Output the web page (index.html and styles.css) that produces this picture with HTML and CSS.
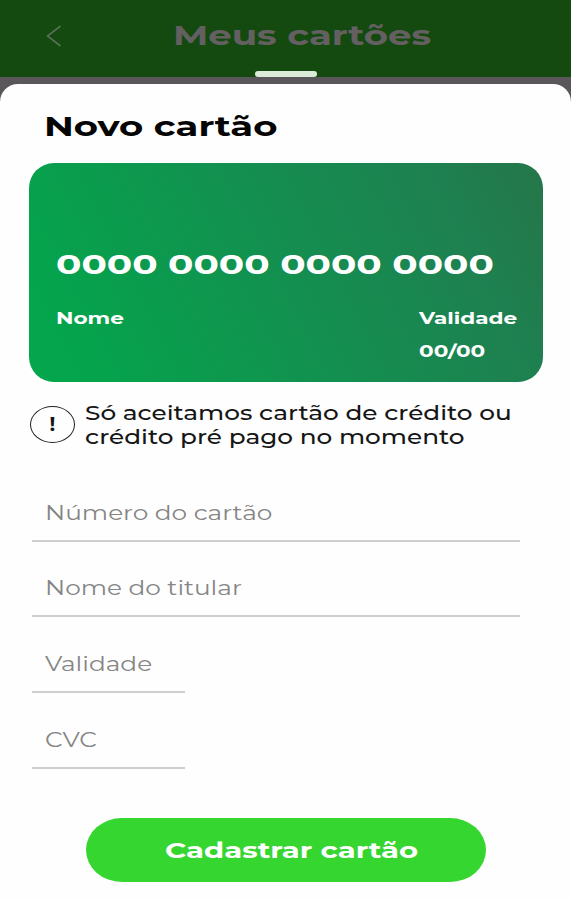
FILE: index.html
```html
<!DOCTYPE html>
<html lang="pt-BR">
<head>
  <meta charset="UTF-8" />
  <meta name="viewport" content="width=device-width, initial-scale=1.0"/>
  <title>Novo cartão</title>
  <link rel="stylesheet" href="styles.css">
</head>
<body>

<header class="top-bar">
  <svg class="back-icon" width="16" height="22" viewBox="0 0 16 22" fill="none" stroke="#557053" stroke-width="1.6">
    <path d="M14.5 1 L1.5 11 L14.5 21" />
  </svg>
  <h1><span class="wide page-title">Meus cartões</span></h1>
  <div class="handle"></div>
</header>

<main class="sheet">
  <h2><span class="wide sheet-title">Novo cartão</span></h2>

  <!-- Cartão -->
  <section class="card">
    <p class="card-number"><span class="wide number">0000 0000 0000 0000</span></p>
    <div class="card-info">
      <span class="wide">Nome</span>
      <div class="expiry">
        <span class="wide">Validade</span>
        <span class="wide expiry-date">00/00</span>
      </div>
    </div>
  </section>

  <!-- Aviso -->
  <div class="notice">
    <div class="notice-icon">!</div>
    <p>
      <span class="wide">Só aceitamos cartão de crédito ou</span>
      <span class="wide">crédito pré pago no momento</span>
    </p>
  </div>

  <!-- Formulário -->
  <form class="card-form">
    <label class="field"><span class="wide">Número do cartão</span></label>
    <label class="field"><span class="wide">Nome do titular</span></label>
    <label class="field short"><span class="wide">Validade</span></label>
    <label class="field short"><span class="wide">CVC</span></label>
    <button type="button" class="submit-btn"><span class="wide">Cadastrar cartão</span></button>
  </form>
</main>

</body>
</html>
```

FILE: styles.css
```css
* {
  box-sizing: border-box;
  margin: 0;
  padding: 0;
}

body {
  height: 900px;
  display: flex;
  flex-direction: column;
  background-color: #5a575a;
  font-family: Montserrat, Inter, sans-serif;
  overflow: hidden;
}

/* letras alargadas */
.wide {
  display: block;
  width: max-content;
  white-space: nowrap;
  transform: scaleX(1.27);
  transform-origin: left center;
}

.top-bar {
  position: relative;
  display: flex;
  align-items: center;
  height: 77px;
  padding: 0 0 6px 46px;
  background-color: #144a10;
}

.top-bar h1 {
  margin-left: 111px;
  font-size: 27px;
  line-height: 34px;
  color: #646062;
}

.page-title {
  transform: scaleX(1.37);
}

.handle {
  position: absolute;
  left: 255px;
  top: 71px;
  width: 62px;
  height: 6px;
  border-radius: 3px;
  background-color: #dcebd9;
}

.sheet {
  flex: 1;
  margin-top: 7px;
  padding: 25px 28px 0 29px;
  border-radius: 18px 18px 0 0;
  background-color: #fefefe;
}

.sheet h2 {
  padding-left: 15px;
  font-size: 28px;
  line-height: 34px;
  color: #050505;
}

.sheet-title {
  transform: scaleX(1.32);
}

.card {
  height: 219px;
  margin-top: 20px;
  padding: 83px 26px 0 27px;
  border-radius: 25px;
  background: linear-gradient(63deg, #04a54c 8%, #158d50 55%, #1e8050 82%, #257649 100%);
  color: #fff;
  font-weight: 700;
}

.card-number {
  font-size: 28px;
  line-height: 36px;
}

.number {
  transform: scaleX(1.335);
}

.card-info {
  display: flex;
  justify-content: space-between;
  margin-top: 24px;
  font-size: 17px;
  line-height: 24px;
}

.expiry {
  width: 98px;
}

.expiry-date {
  margin-top: 9px;
}

.notice {
  display: flex;
  margin-top: 19px;
  font-size: 19.5px;
  font-weight: 500;
  line-height: 24px;
  color: #161616;
}

.notice-icon {
  width: 45px;
  height: 37px;
  margin: 5px 10px 0 1px;
  border: 1.5px solid #222;
  border-radius: 50%;
  font-size: 20px;
  font-weight: 700;
  line-height: 34px;
  text-align: center;
}

.card-form {
  display: flex;
  flex-direction: column;
  margin-top: 17px;
}

.field {
  display: flex;
  align-items: flex-end;
  width: 488px;
  height: 75.7px;
  margin-left: 3px;
  padding: 0 0 15px 12.5px;
  border-bottom: 2px solid #cfcfcf;
  font-size: 20px;
  line-height: 24px;
  color: #858585;
}

.field .wide {
  transform: scaleX(1.24);
}

.field.short {
  width: 153px;
}

.submit-btn {
  width: 400px;
  height: 64px;
  margin: 49px 0 0 57px;
  padding-left: 79px;
  border: none;
  border-radius: 36px / 32px;
  background-color: #36d630;
  color: #fff;
  font-family: inherit;
  font-size: 22.5px;
  font-weight: 700;
}

.submit-btn .wide {
  transform: scaleX(1.295);
}
```
